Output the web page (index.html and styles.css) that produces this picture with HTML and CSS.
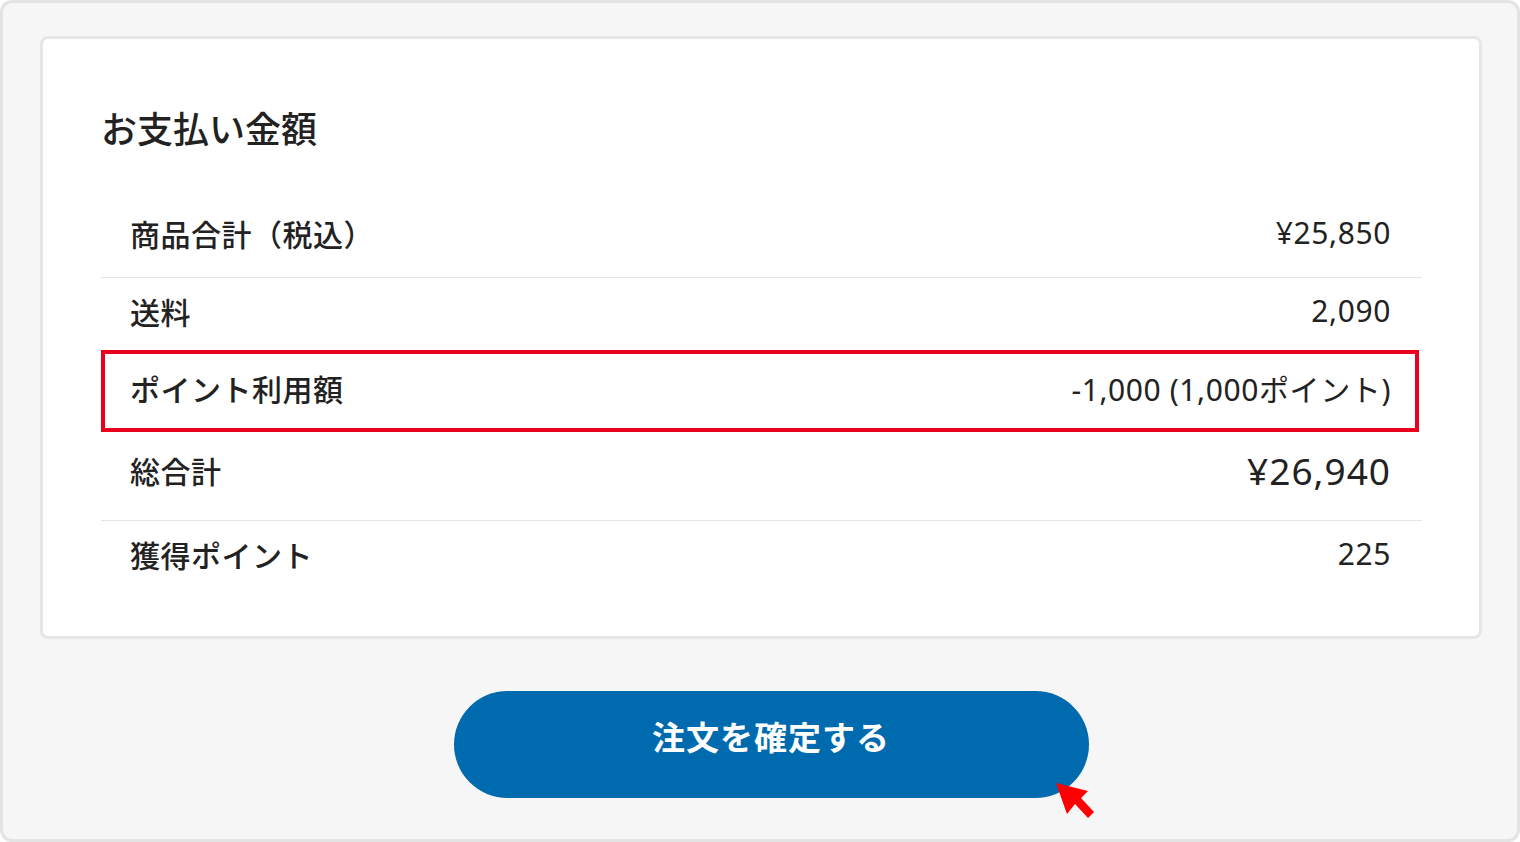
FILE: index.html
```html
<!DOCTYPE html>
<html lang="ja">
<head>
<meta charset="utf-8">
<title>お支払い金額</title>
<link rel="stylesheet" href="styles.css">
</head>
<body>
<div class="frame">
  <section class="card">
    <h2 class="title">お支払い金額</h2>
    <div class="rows">
      <div class="row row-a line"><span class="label">商品合計（税込）</span><span class="value">¥25,850</span></div>
      <div class="row row-b"><span class="label">送料</span><span class="value">2,090</span></div>
      <div class="row row-hl"><span class="label">ポイント利用額</span><span class="value">-1,000 (1,000ポイント)</span></div>
      <div class="row row-total line"><span class="label">総合計</span><span class="value total">¥26,940</span></div>
      <div class="row row-b"><span class="label">獲得ポイント</span><span class="value">225</span></div>
    </div>
  </section>
  <div class="actions">
    <button class="confirm">注文を確定する
      <svg class="cursor" width="50" height="46" viewBox="0 0 50 46"><polygon points="6,7 38,15 31,22 44,36 38,42 25,28 17,38" fill="#ff0000"/></svg>
    </button>
  </div>
</div>
</body>
</html>
```
FILE: styles.css
```css
* { box-sizing: border-box; }
html, body { margin: 0; padding: 0; }
body {
  width: 1520px;
  height: 842px;
  font-family: "Noto Sans CJK JP", sans-serif;
  color: #222;
  background: #fff;
}
.frame {
  width: 1520px;
  height: 842px;
  background: #f6f6f6;
  border: 3px solid #e3e3e3;
  border-radius: 12px;
  padding: 33px 35px 0 37px;
}
.card {
  background: #fff;
  border: 3px solid #e6e6e6;
  border-radius: 8px;
  padding: 68px 57px 42px 58px;
  height: 603px;
}
.title {
  margin: 0;
  font-family: "Noto Sans CJK JP", sans-serif;
  font-size: 36px;
  line-height: 40px;
  font-weight: 500;
  color: #222;
}
.rows {
  margin-top: 48px;
}
.row {
  display: flex;
  justify-content: space-between;
  align-items: center;
  padding: 0 31px 7px 29px;
}
.row.line { border-bottom: 1px solid #e5e5e5; }
.row-a { height: 83px; }
.row-b { height: 72px; }
.row-hl {
  height: 82px;
  border: 4px solid #e8001c;
  margin-right: 3px;
  padding: 0 24px 7px 25px;
}
.row-total { height: 89px; padding-bottom: 12px; }
.label {
  font-family: "Noto Sans CJK JP", sans-serif;
  font-size: 30px;
  font-weight: 500;
  letter-spacing: 0.5px;
  color: #222;
}
.value {
  font-family: "Noto Sans", "Noto Sans CJK JP", sans-serif;
  font-size: 30px;
  font-weight: 400;
  letter-spacing: 0.6px;
  color: #222;
}
.value.total { font-size: 37px; letter-spacing: 1px; }
.actions {
  display: flex;
  justify-content: center;
  padding-top: 52px;
  padding-left: 20px;
}
.confirm {
  position: relative;
  width: 635px;
  height: 107px;
  border: none;
  border-radius: 54px;
  background: #006aae;
  color: #fff;
  font-family: "Noto Sans CJK JP", sans-serif;
  font-size: 33px;
  font-weight: 700;
  letter-spacing: 1px;
  padding: 0 0 17px 0;
}
.cursor {
  position: absolute;
  left: 596px;
  top: 85px;
}
```
